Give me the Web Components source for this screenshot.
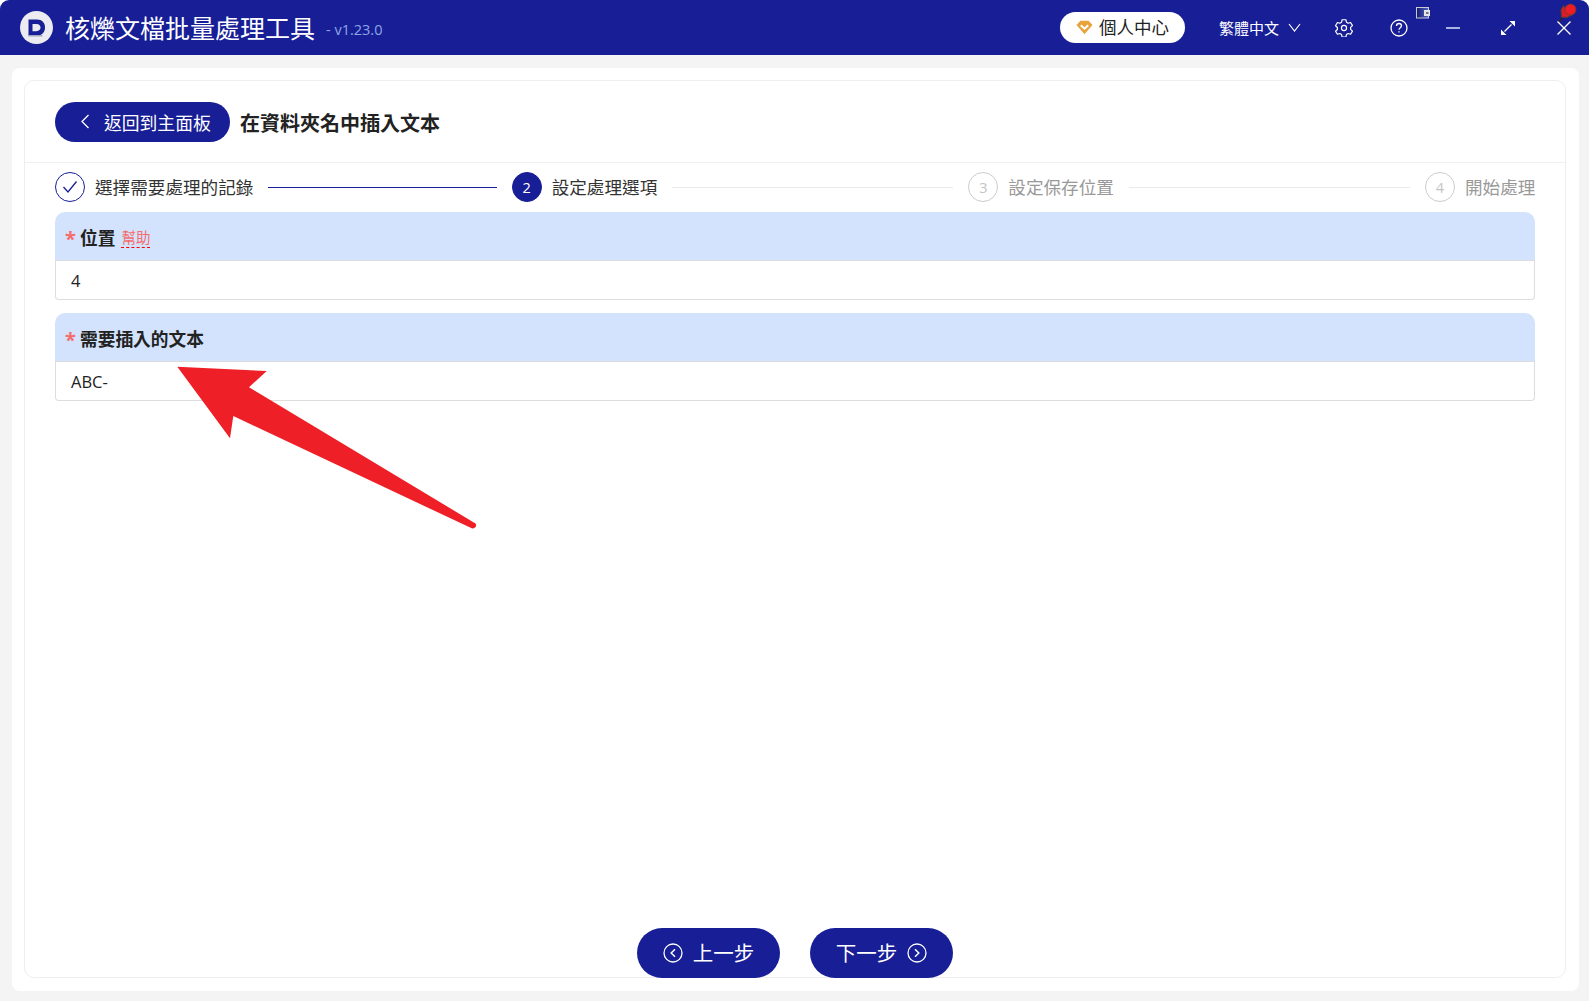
<!DOCTYPE html>
<html lang="zh-Hant">
<head>
<meta charset="utf-8">
<title>核爍文檔批量處理工具</title>
<style>
html, body { margin: 0; height: 100%; background: #fff; }
body { font-family: "Open Sans", "Noto Sans CJK TC", sans-serif; color: #222; overflow: hidden; }
</style>
</head>
<body>
<app-shell>
  <app-header slot="header" version="- v1.23.0">核爍文檔批量處理工具</app-header>
  <task-card>
    <back-bar slot="top" label="返回到主面板">在資料夾名中插入文本</back-bar>
    <step-bar slot="steps">
      <step-item state="done" line="on" num="1">選擇需要處理的記錄</step-item>
      <step-item state="active" num="2">設定處理選項</step-item>
      <step-item num="3">設定保存位置</step-item>
      <step-item num="4" last>開始處理</step-item>
    </step-bar>
    <form-field label="位置" help="幫助" value="4"></form-field>
    <form-field label="需要插入的文本" value="ABC-"></form-field>
    <pill-button slot="footer" icon="prev">上一步</pill-button>
    <pill-button slot="footer" icon="next">下一步</pill-button>
  </task-card>
  <hint-arrow></hint-arrow>
</app-shell>

<script>
class AppShell extends HTMLElement {
    constructor() {
        super()
        this.attachShadow({mode: 'open'})
        this.shadowRoot.innerHTML = `
            <style>
                :host { display: flex; flex-direction: column; height: 1001px; position: relative; }
                main { flex: 1; min-height: 0; display: flex; background: #f4f4f4; padding: 13px 10px 10px 12px; }
            </style>
            <slot name="header"></slot>
            <main><slot></slot></main>
        `
    }
}

class AppHeader extends HTMLElement {
    constructor() {
        super()
        this.attachShadow({mode: 'open'})
        this.shadowRoot.innerHTML = `
            <style>
                :host { display: block; background: #fff; }
                header { position: relative; height: 55px; background: #171e96; color: #fff; border-radius: 9px 9px 0 0;
                    display: flex; align-items: center; padding: 0 18px 0 20px; box-sizing: border-box; }
                .logo { width: 33px; height: 33px; margin-right: 12px; flex: none; }
                .name { font-size: 25px; line-height: 34px; margin-top: 1px; white-space: nowrap; }
                .ver { font-size: 14.5px; color: #8ea6e2; margin-left: 11px; margin-top: 3px; white-space: nowrap; }
                .right { margin-left: auto; display: flex; align-items: center; }
                .vip { width: 125px; height: 31px; margin-right: 34px; background: #fff; border-radius: 16px; color: #222;
                    display: flex; align-items: center; justify-content: center; gap: 6px; font-size: 17.5px; }
                .vip span { margin-top: -2px; }
                svg { display: block; flex: none; }
                .lang { font-size: 15px; margin-right: 9px; margin-top: 0; white-space: nowrap; }
                .chev { margin-right: 34px; }
                .gear { margin-right: 37px; }
                .help { margin-right: 38px; }
                .min { margin-right: 41px; }
                .max { margin-right: 42px; }
                .overlay { position: absolute; }
                .win { left: 1416px; top: 7px; }
                .pin { left: 1558px; top: 3px; }
            </style>
            <header>
                <svg class="logo" viewBox="0 0 33 33">
                    <circle cx="16.5" cy="16.5" r="16.5" fill="#ecebf1"/>
                    <path d="M8.5 8.5h8.5c5 0 8 3.500 8 8s-3 8.200-8 8.200h-8.500z" fill="#171e96"/>
                    <path d="M12.500 13h4c2.500 0 4 1.500 4 3.600s-1.500 3.600-4 3.600h-4z" fill="#ecebf1"/>
                    <path d="M8.500 24.800h14" stroke="#a9a9c4" stroke-width="1.500"/>
                </svg>
                <span class="name"><slot></slot></span>
                <span class="ver">${this.getAttribute('version')}</span>
                <div class="right">
                    <div class="vip">
                        <svg width="17" height="15" viewBox="0 0 17 15">
                            <path d="M4.500 .8h8L16.500 5l-8 9.200L.5 5z" fill="#e8a33d"/>
                            <path d="M4.800 5.200l3.700 3.500 3.700-3.500" fill="none" stroke="#fff" stroke-width="2"/>
                        </svg>
                        <span>個人中心</span>
                    </div>
                    <span class="lang">繁體中文</span>
                    <svg class="chev" width="13" height="9" viewBox="0 0 13 9"><path d="M1 1l5.500 7L12 1" fill="none" stroke="#fff" stroke-width="1.200"/></svg>
                    <svg class="gear" width="18" height="18" viewBox="0 0 24 24" fill="none" stroke="#fff" stroke-width="1.600" stroke-linejoin="round">
                        <circle cx="12" cy="12" r="3.400"/>
                        <path d="M9.500 1h5l.8 3.300 2.200 1.300 3.300-1 2.500 4.300-2.500 2.300v2.600l2.500 2.300-2.500 4.300-3.300-1-2.200 1.300-.8 3.300h-5l-.8-3.300-2.200-1.300-3.300 1L.7 16.300l2.500-2.300v-2.600L.7 9l2.500-4.300 3.300 1 2.200-1.300z"/>
                    </svg>
                    <svg class="help" width="18" height="18" viewBox="0 0 18 18" fill="none" stroke="#fff" stroke-width="1.300">
                        <circle cx="9" cy="9" r="8"/>
                        <path d="M6.500 7c0-1.500 1.100-2.500 2.500-2.500s2.500 1 2.500 2.300c0 1.800-2.500 1.900-2.500 3.900"/>
                        <path d="M9 12.200v1.300"/>
                    </svg>
                    <svg class="min" width="14" height="2" viewBox="0 0 14 2"><path d="M0 1h14" stroke="#dbe6fb" stroke-width="1.500"/></svg>
                    <svg class="max" width="14" height="14" viewBox="0 0 14 14">
                        <path d="M3.500 10.500l7-7" stroke="#fff" stroke-width="1.200"/>
                        <path d="M8.500 0H14v5.500zM0 8.500V14h5.500z" fill="#fff"/>
                    </svg>
                    <svg width="14" height="14" viewBox="0 0 14 14"><path d="M.5.5l13 13M13.500.5l-13 13" stroke="#fff" stroke-width="1.300"/></svg>
                </div>
                <svg class="overlay win" width="14" height="12" viewBox="0 0 14 12">
                    <defs><linearGradient id="wg"><stop offset="0" stop-color="#141a6e"/><stop offset="1" stop-color="#5068c8"/></linearGradient></defs>
                    <rect x=".5" y=".5" width="12" height="10.500" fill="url(#wg)" stroke="#c9c9d2"/>
                    <rect x="8" y="3" width="6" height="6" fill="#e6e6ea"/>
                    <rect x="10" y="5" width="2.500" height="2" fill="#70707e"/>
                </svg>
                <svg class="overlay pin" width="20" height="20" viewBox="0 0 20 20">
                    <path d="M6 13L1 18.500" stroke="#2e2628" stroke-width="1.700"/>
                    <path d="M5.500 3L3 7l.5 7 5.500 .5 5.500-3z" fill="#d81f26" stroke="#5b3a38" stroke-width="1.200"/>
                    <circle cx="12.500" cy="6.500" r="5.500" fill="#ee1c25" stroke="#6a3a30" stroke-width=".8"/>
                </svg>
            </header>
        `
    }
}

class TaskCard extends HTMLElement {
    constructor() {
        super()
        this.attachShadow({mode: 'open'})
        this.shadowRoot.innerHTML = `
            <style>
                :host { display: flex; flex: 1; min-width: 0; background: #fff; border-radius: 8px; padding: 12px 13px 13px 12px; box-sizing: border-box; }
                .inner { flex: 1; min-width: 0; display: flex; flex-direction: column; border: 1px solid #eee; border-radius: 10px; box-sizing: border-box; }
                .body { padding: 0 30px; display: flex; flex-direction: column; gap: 13px; }
                footer { margin-top: auto; margin-bottom: -1px; display: flex; justify-content: center; gap: 30px; }
            </style>
            <div class="inner">
                <slot name="top"></slot>
                <slot name="steps"></slot>
                <div class="body"><slot></slot></div>
                <footer><slot name="footer"></slot></footer>
            </div>
        `
    }
}

class BackBar extends HTMLElement {
    constructor() {
        super()
        this.attachShadow({mode: 'open'})
        this.shadowRoot.innerHTML = `
            <style>
                :host { display: flex; align-items: center; height: 82px; padding: 0 30px; box-sizing: border-box; border-bottom: 1px solid #f0f0f0; }
                .btn { width: 175px; height: 40px; background: #171e96; color: #fff; border-radius: 20px; display: flex; align-items: center;
                    padding-left: 25px; box-sizing: border-box; font-size: 17.8px; white-space: nowrap; }
                svg { margin-right: 14px; flex: none; }
                h1 { margin: 2px 0 0 10px; font-size: 20px; font-weight: 700; color: #222; white-space: nowrap; }
            </style>
            <div class="btn">
                <svg width="10" height="15" viewBox="0 0 10 15"><path d="M8.500 1L2 7.500 8.500 14" fill="none" stroke="#fff" stroke-width="1.300"/></svg>
                <span>${this.getAttribute('label')}</span>
            </div>
            <h1><slot></slot></h1>
        `
    }
}

class StepBar extends HTMLElement {
    constructor() {
        super()
        this.attachShadow({mode: 'open'})
        this.shadowRoot.innerHTML = `
            <style>
                :host { display: grid; grid-template-columns: 1fr 1fr 1fr 110px; height: 48px; padding: 0 30px 1px; align-items: center; }
            </style>
            <slot></slot>
        `
    }
}

class StepItem extends HTMLElement {
    constructor() {
        super()
        this.attachShadow({mode: 'open'})
        const state = this.getAttribute('state') || 'todo'
        const num = this.getAttribute('num')
        const mark = state === 'done'
            ? `<svg width="16" height="14" viewBox="0 0 16 14"><path d="M1.500 7l4.500 5L14.500 1.500" fill="none" stroke="#171e96" stroke-width="1.300"/></svg>`
            : num
        this.shadowRoot.innerHTML = `
            <style>
                :host { display: flex; align-items: center; min-width: 0; }
                .row { display: flex; align-items: center; flex: 1; min-width: 0; }
                .dot { width: 30px; height: 30px; box-sizing: border-box; border-radius: 50%; flex: none; display: flex; align-items: center; justify-content: center;
                    font-size: 14.5px; border: 1px solid #ccc; color: #c4c4c4; }
                .done .dot { border-color: #171e96; }
                .active .dot { background: #171e96; border-color: #171e96; color: #fff; }
                .txt { margin: -2px 0 0 10px; font-size: 17.6px; color: #999; white-space: nowrap; }
                .done .txt, .active .txt { color: #333; }
                .line { flex: 1; height: 1px; background: #eaeaea; margin: 0 15px; }
                .line.on { background: #171e96; }
            </style>
            <div class="row ${state}">
                <span class="dot">${mark}</span>
                <span class="txt"><slot></slot></span>
                ${this.hasAttribute('last') ? '' : `<span class="line ${this.getAttribute('line') || ''}"></span>`}
            </div>
        `
    }
}

class FormField extends HTMLElement {
    constructor() {
        super()
        this.attachShadow({mode: 'open'})
        const help = this.getAttribute('help')
        this.shadowRoot.innerHTML = `
            <style>
                :host { display: block; }
                .head { height: 48px; background: #d3e3fd; border-radius: 10px 10px 0 0; display: flex; align-items: center; padding-left: 10px; box-sizing: border-box; }
                .star { color: #f56c6c; font-size: 20px; font-weight: 700; width: 15px; flex: none; margin-top: 4px; }
                label { font-size: 17.7px; font-weight: 700; color: #222; margin-top: 1px; }
                .help { margin-left: 6px; margin-top: 3px; font-size: 14.5px; line-height: 19px; color: #f56c6c; border-bottom: 1px dashed #f00; }
                .box { height: 40px; border: 1px solid #ddd; border-top-color: #dcdcdc; border-radius: 0 0 4px 4px; box-sizing: border-box; padding-left: 15px;
                    display: flex; align-items: center; font-size: 16.5px; color: #222; }
            </style>
            <div class="head">
                <span class="star">*</span>
                <label>${this.getAttribute('label')}</label>
                ${help ? `<span class="help">${help}</span>` : ''}
            </div>
            <div class="box">${this.getAttribute('value')}</div>
        `
    }
}

class PillButton extends HTMLElement {
    constructor() {
        super()
        this.attachShadow({mode: 'open'})
        const next = this.getAttribute('icon') === 'next'
        const icon = `<svg width="20" height="20" viewBox="0 0 20 20" fill="none" stroke="#fff" stroke-width="1.300">
            <circle cx="10" cy="10" r="9"/><path d="${next ? 'M8 6.300l3.800 3.700L8 13.700' : 'M12 6.300L8.200 10l3.800 3.700'}" stroke-width="1.500"/></svg>`
        this.shadowRoot.innerHTML = `
            <style>
                :host { display: flex; align-items: center; justify-content: center; gap: 10px; width: 143px; height: 50px; background: #171e96; color: #fff;
                    border-radius: 25px; font-size: 20.5px; position: relative; }
                span { margin-top: -2px; }
                svg { flex: none; }
            </style>
            ${next ? '' : icon}<span><slot></slot></span>${next ? icon : ''}
        `
    }
}

class HintArrow extends HTMLElement {
    constructor() {
        super()
        this.attachShadow({mode: 'open'})
        this.shadowRoot.innerHTML = `
            <style>
                :host { position: absolute; left: 0; top: 0; width: 1589px; height: 1001px; pointer-events: none; }
                svg { display: block; }
            </style>
            <svg width="1589" height="1001" viewBox="0 0 1589 1001">
                <path d="M177.300 366.700L266.700 371 249 387.300 475.500 523.500Q477 525.500 475 527.500 473.500 528.800 471.700 528.300L233.300 416 230 438.300z" fill="#ee1f26"/>
            </svg>
        `
    }
}

customElements.define('app-shell', AppShell)
customElements.define('app-header', AppHeader)
customElements.define('task-card', TaskCard)
customElements.define('back-bar', BackBar)
customElements.define('step-bar', StepBar)
customElements.define('step-item', StepItem)
customElements.define('form-field', FormField)
customElements.define('pill-button', PillButton)
customElements.define('hint-arrow', HintArrow)
</script>
</body>
</html>
